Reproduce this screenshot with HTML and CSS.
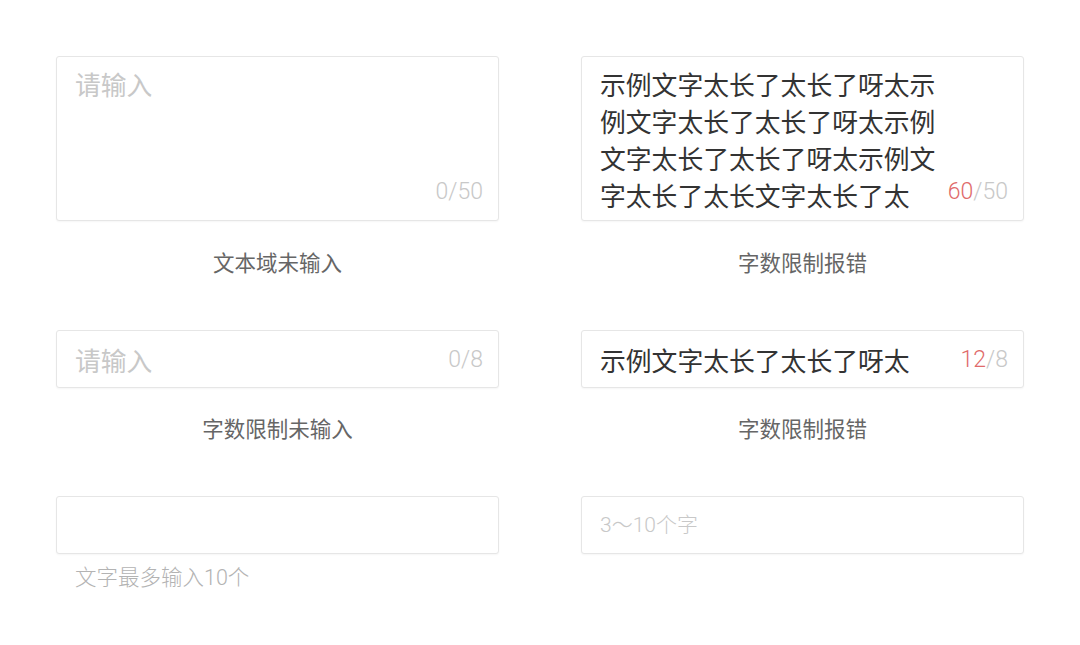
FILE: index.html
```html
<html lang="zh-CN">
<head>
  <meta charset="UTF-8">
  <meta name="viewport" content="width=device-width, initial-scale=1.0">
  <title>输入框</title>
  <link rel="stylesheet" href="styles.css">
</head>

<body>
  <div class="board">
    <!-- 第一行：文本域 -->
    <div class="cell">
      <div class="field area">
        <div class="value placeholder">请输入</div>
        <div class="count">0/50</div>
      </div>
      <div class="caption">文本域未输入</div>
    </div>
    <div class="cell">
      <div class="field area">
        <div class="value">示例文字太长了太长了呀太示例文字太长了太长了呀太示例文字太长了太长了呀太示例文字太长了太长文字太长了太</div>
        <div class="count"><span class="over">60</span>/50</div>
      </div>
      <div class="caption">字数限制报错</div>
    </div>

    <!-- 第二行：单行输入 -->
    <div class="cell">
      <div class="field line">
        <div class="value placeholder">请输入</div>
        <div class="count">0/8</div>
      </div>
      <div class="caption short">字数限制未输入</div>
    </div>
    <div class="cell">
      <div class="field line">
        <div class="value">示例文字太长了太长了呀太</div>
        <div class="count"><span class="over">12</span>/8</div>
      </div>
      <div class="caption short">字数限制报错</div>
    </div>

    <!-- 第三行 -->
    <div class="cell">
      <div class="field line"></div>
      <div class="hint">文字最多输入10个</div>
    </div>
    <div class="cell">
      <div class="field line">
        <div class="value small placeholder">3～10个字</div>
      </div>
    </div>
  </div>
</body>
</html>
```

FILE: styles.css
```css
body {
  margin: 0;
  padding: 0;
  background-color: #fff;
  font-family: "Noto Sans CJK SC", "Noto Sans", sans-serif;
}

.board {
  display: grid;
  grid-template-columns: 443px 443px;
  column-gap: 82px;
  row-gap: 53px;
  padding: 56px 0 0 56px;
}

.cell {
  display: flex;
  flex-direction: column;
}

.field {
  box-sizing: border-box;
  border: 1px solid #e6e6e6;
  border-radius: 3px;
  box-shadow: 0 1px 2px rgba(0, 0, 0, 0.04);
  background-color: #fff;
  display: flex;
  justify-content: space-between;
  padding: 0 15px 0 18px;
}

.field.area {
  height: 165px;
  align-items: flex-end;
  padding-top: 8px;
  padding-bottom: 10px;
}

.field.line {
  height: 58px;
  align-items: center;
}

.value {
  font-size: 25.8px;
  line-height: 37px;
  color: #333;
  width: 13em;
  word-break: break-all;
}

.field.area .value {
  align-self: flex-start;
}

.value.small {
  font-family: Roboto, "Noto Sans CJK SC", sans-serif;
  font-weight: 300;
  font-size: 21px;
}

.placeholder {
  color: #c8c8c8;
}

.count {
  font-family: Roboto, "Noto Sans CJK SC", sans-serif;
  font-weight: 300;
  font-size: 23px;
  line-height: 37px;
  color: #c8c8c8;
  white-space: nowrap;
}

.over {
  color: #e06a6a;
}

.caption {
  margin-top: 26px;
  font-size: 21.5px;
  line-height: 30px;
  color: #666;
  text-align: center;
}

.caption.short {
  margin-top: 25px;
}

.hint {
  margin-top: 9px;
  padding-left: 19px;
  font-family: Roboto, "Noto Sans CJK SC", sans-serif;
  font-weight: 300;
  font-size: 21.5px;
  line-height: 30px;
  color: #b3b3b3;
}
```
